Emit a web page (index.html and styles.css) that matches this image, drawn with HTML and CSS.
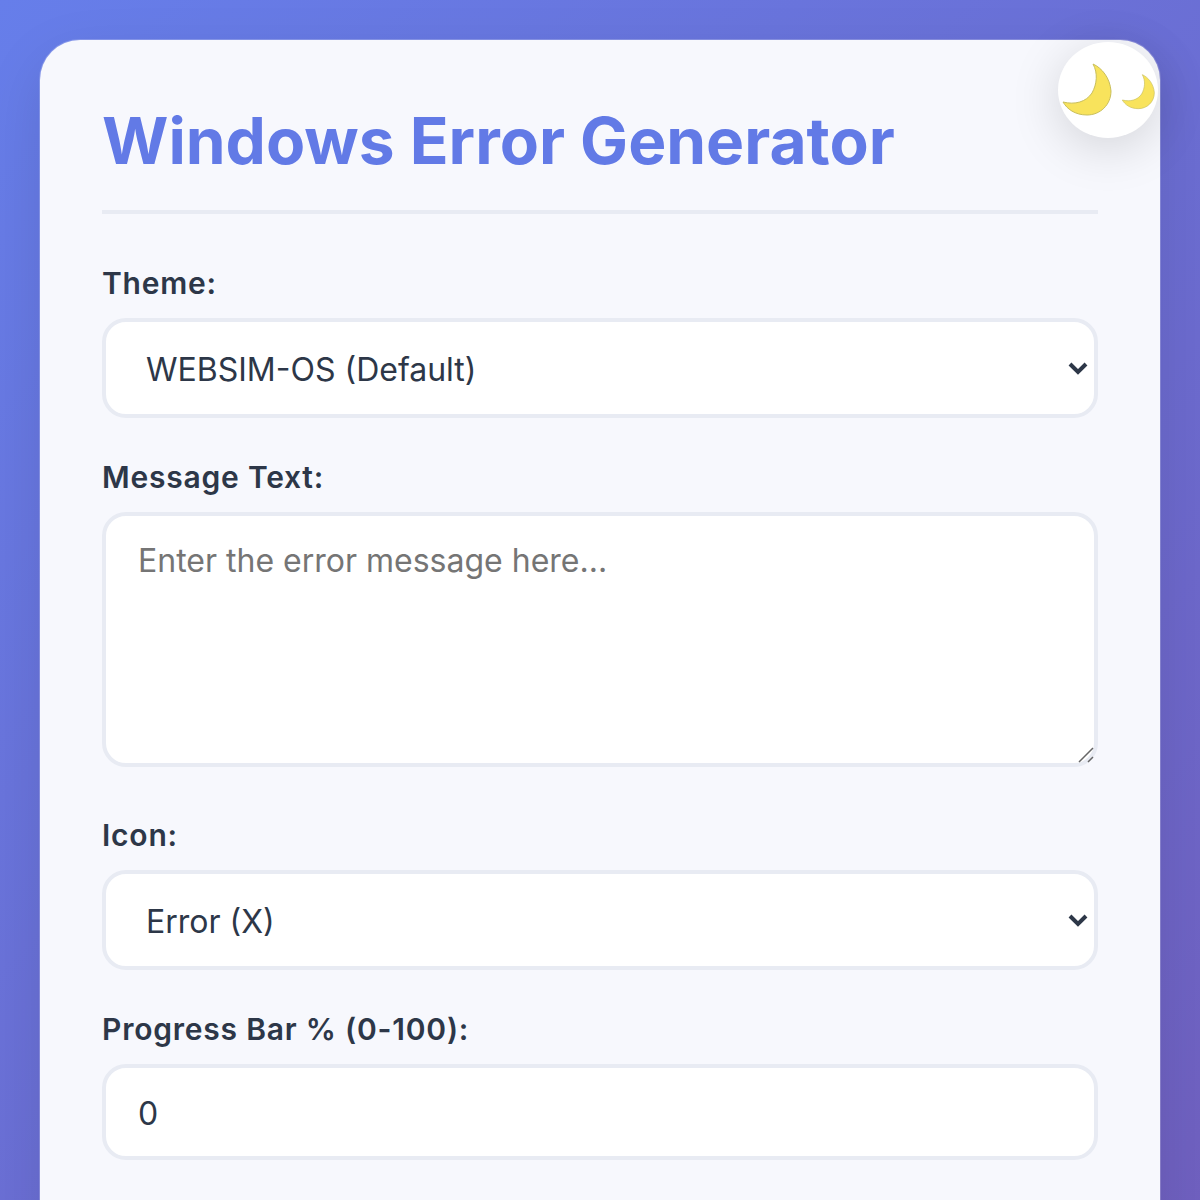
FILE: index.html
```html
<!DOCTYPE html>
<html lang="en">
<head>
<meta charset="utf-8">
<title>Windows Error Generator</title>
<link rel="stylesheet" href="styles.css">
</head>
<body>
<main class="card">
  <button class="toggle" type="button" aria-label="Toggle dark mode">
    <svg class="moon moon-lg" viewBox="0 0 54 54"><path d="M32 1C41 5 49 15 50 28C50 42 39 52 26 52C14 52 6 46 2 39C14 42 25 39 31 30C36 21 37 10 32 1Z"/></svg>
    <svg class="moon moon-sm" viewBox="0 0 54 54"><path d="M32 1C41 5 49 15 50 28C50 42 39 52 26 52C14 52 6 46 2 39C14 42 25 39 31 30C36 21 37 10 32 1Z"/></svg>
  </button>
  <h1 class="title">Windows Error Generator</h1>
  <div class="field">
    <label class="label" for="theme">Theme:</label>
    <div class="select-wrap">
      <select class="control select" id="theme"><option>WEBSIM-OS (Default)</option></select>
      <svg class="chevron" viewBox="0 0 20 14"><path d="M2 3L10 11L18 3"/></svg>
    </div>
  </div>
  <div class="field field-text">
    <label class="label" for="message">Message Text:</label>
    <div class="text-wrap">
      <textarea class="control textarea" id="message" placeholder="Enter the error message here..."></textarea>
      <svg class="grip" viewBox="0 0 16 16"><path d="M1 15L15 1M10 15L15 10"/></svg>
    </div>
  </div>
  <div class="field">
    <label class="label" for="icon">Icon:</label>
    <div class="select-wrap">
      <select class="control select" id="icon"><option>Error (X)</option></select>
      <svg class="chevron" viewBox="0 0 20 14"><path d="M2 3L10 11L18 3"/></svg>
    </div>
  </div>
  <div class="field">
    <label class="label" for="progress">Progress Bar % (0-100):</label>
    <input class="control input" id="progress" type="text" value="0">
  </div>
</main>
</body>
</html>
```
FILE: styles.css
```css
* { box-sizing: border-box; }
html, body { margin: 0; }
body {
  min-height: 2900px;
  padding: 40px;
  background: linear-gradient(135deg, #667eea 0%, #764ba2 100%);
  font-family: Inter, "Liberation Sans", sans-serif;
  color: #2d3748;
}
.card {
  position: relative;
  min-height: 2820px;
  padding: 62px;
  background: #f7f8fd;
  border-radius: 40px;
  box-shadow: 0 0 0 1px rgba(255, 255, 255, 0.2), 0 20px 60px rgba(0, 0, 0, 0.1);
}
.toggle {
  position: absolute;
  top: 2px;
  right: 2px;
  display: flex;
  align-items: center;
  width: 100px;
  height: 96px;
  padding: 0;
  border: none;
  border-radius: 50%;
  background: #fff;
  box-shadow: 0 10px 50px rgba(0, 0, 0, 0.15);
}
.moon { display: block; fill: #f8e35c; stroke: #c9bf5c; stroke-width: 1; }
.moon-lg { width: 54px; height: 54px; margin-left: 3px; }
.moon-sm { width: 36px; height: 36px; margin-left: 6px; margin-top: 3px; }
.title {
  margin: 0 0 51px;
  padding-bottom: 30px;
  border-bottom: 4px solid #e8ebf3;
  font-size: 64px;
  line-height: 78px;
  font-weight: 700;
  color: #627ae6;
}
.field { margin-bottom: 41px; }
.field-text { margin-bottom: 50px; }
.label {
  display: block;
  margin-bottom: 17px;
  font-size: 30px;
  line-height: 36px;
  font-weight: 600;
  letter-spacing: 0.78px;
  color: #2d3748;
}
.select-wrap, .text-wrap { position: relative; }
.control {
  display: block;
  width: 100%;
  border: 4px solid #e8ebf3;
  border-radius: 24px;
  background: #fff;
  font-family: inherit;
  font-size: 32px;
  color: #2d3748;
}
.select {
  height: 100px;
  padding: 2px 48px 0 40px;
  appearance: none;
}
.chevron {
  position: absolute;
  top: 43px;
  right: 10px;
  width: 20px;
  height: 14px;
  fill: none;
  stroke: #2d3748;
  stroke-width: 4;
  pointer-events: none;
}
.textarea { height: 255px; padding: 25px 32px; resize: none; }
.textarea::placeholder { color: #757575; opacity: 1; }
.grip {
  position: absolute;
  right: 4px;
  bottom: 4px;
  width: 16px;
  height: 16px;
  fill: none;
  stroke: #666;
  stroke-width: 1.5;
  pointer-events: none;
}
.input { height: 96px; padding: 3px 32px 0; }
```
